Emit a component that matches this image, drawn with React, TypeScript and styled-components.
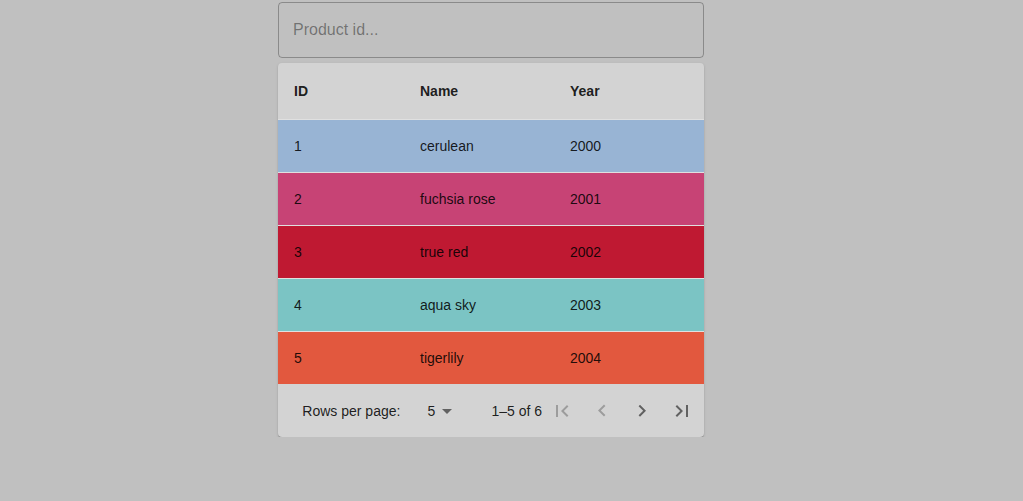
import React from "react";
import styled, { createGlobalStyle } from "styled-components";

const GlobalStyle = createGlobalStyle`
  html, body {
    margin: 0;
    padding: 0;
    background: #c0c0c0;
    font-family: "Liberation Sans", Arial, Helvetica, sans-serif;
  }
  * { box-sizing: border-box; }
`;

const Page = styled.div`
  display: flex;
  flex-direction: column;
  width: 426px;
  margin: 2px 0 0 278px;
`;

const SearchInput = styled.input`
  height: 56px;
  width: 100%;
  margin: 0 0 5px 0;
  padding: 0 14px;
  border: 1px solid rgba(0, 0, 0, 0.28);
  border-radius: 4px;
  background: transparent;
  font-family: "Liberation Sans", Arial, sans-serif;
  font-size: 16px;
  color: rgba(0, 0, 0, 0.87);
  outline: none;
  &::placeholder {
    color: rgba(0, 0, 0, 0.42);
    opacity: 1;
  }
`;

const Paper = styled.div`
  background: #d3d3d3;
  border-radius: 4px;
  overflow: hidden;
  box-shadow: 0px 2px 1px -1px rgba(0, 0, 0, 0.2), 0px 1px 1px 0px rgba(0, 0, 0, 0.14),
    0px 1px 3px 0px rgba(0, 0, 0, 0.12);
`;

const Table = styled.table`
  width: 100%;
  border-collapse: collapse;
  border-spacing: 0;
  table-layout: fixed;
`;

const HeadCell = styled.th<{ $w: number }>`
  width: ${(p) => p.$w}px;
  text-align: left;
  padding: 16px;
  font-size: 14px;
  font-weight: 700;
  line-height: 24px;
  color: rgba(0, 0, 0, 0.87);
  border-bottom: 1px solid #e0e0e0;
`;

const Row = styled.tr<{ $bg: string }>`
  background: ${(p) => p.$bg};
`;

const Cell = styled.td`
  padding: 16px;
  font-size: 14px;
  line-height: 20px;
  color: rgba(0, 0, 0, 0.87);
  border-bottom: 1px solid #e0e0e0;
`;

const Body = styled.tbody`
  & tr:last-child td { border-bottom: 0; }
`;

const Toolbar = styled.div`
  display: flex;
  align-items: center;
  height: 53px;
  padding: 0 2px 0 24px;
  font-size: 14px;
  color: rgba(0, 0, 0, 0.87);
`;

const Label = styled.span`
  line-height: 20px;
  white-space: nowrap;
`;

const Select = styled.div`
  display: flex;
  align-items: center;
  margin: 0 32px 0 11px;
  padding-left: 8px;
`;

const SelectValue = styled.span`
  min-width: 16px;
  text-align: right;
  line-height: 20px;
`;

const Displayed = styled.span`
  line-height: 20px;
  white-space: nowrap;
  flex-shrink: 0;
`;

const Spacer = styled.div`
  flex: 1;
`;

const Actions = styled.div`
  display: flex;
  align-items: center;
`;

const IconButton = styled.button<{ $disabled?: boolean }>`
  width: 40px;
  height: 40px;
  padding: 8px;
  border: 0;
  background: transparent;
  display: flex;
  align-items: center;
  justify-content: center;
  color: ${(p) => (p.$disabled ? "rgba(0,0,0,0.26)" : "rgba(0,0,0,0.54)")};
  cursor: ${(p) => (p.$disabled ? "default" : "pointer")};
  svg { width: 24px; height: 24px; fill: currentColor; }
`;

const DropIcon = styled.svg`
  width: 24px;
  height: 24px;
  fill: rgba(0, 0, 0, 0.54);
`;

const rows = [
  { id: 1, name: "cerulean", year: 2000, color: "#98B4D4" },
  { id: 2, name: "fuchsia rose", year: 2001, color: "#C74375" },
  { id: 3, name: "true red", year: 2002, color: "#BF1932" },
  { id: 4, name: "aqua sky", year: 2003, color: "#7BC4C4" },
  { id: 5, name: "tigerlily", year: 2004, color: "#E2583E" },
];

export default function App() {
  return (
    <>
      <GlobalStyle />
      <Page>
        <SearchInput placeholder="Product id..." />
        <Paper>
          <Table>
            <thead>
              <tr>
                <HeadCell $w={126}>ID</HeadCell>
                <HeadCell $w={150}>Name</HeadCell>
                <HeadCell $w={150}>Year</HeadCell>
              </tr>
            </thead>
            <Body>
              {rows.map((r) => (
                <Row key={r.id} $bg={r.color}>
                  <Cell>{r.id}</Cell>
                  <Cell>{r.name}</Cell>
                  <Cell>{r.year}</Cell>
                </Row>
              ))}
            </Body>
          </Table>
          <Toolbar>
            <Spacer />
            <Label>Rows per page:</Label>
            <Select>
              <SelectValue>5</SelectValue>
              <DropIcon viewBox="0 0 24 24">
                <path d="M7 10l5 5 5-5z" />
              </DropIcon>
            </Select>
            <Displayed>1–5 of 6</Displayed>
            <Actions>
              <IconButton $disabled aria-label="first page">
                <svg viewBox="0 0 24 24">
                  <path d="M18.41 16.59L13.82 12l4.59-4.59L17 6l-6 6 6 6zM6 6h2v12H6z" />
                </svg>
              </IconButton>
              <IconButton $disabled aria-label="previous page">
                <svg viewBox="0 0 24 24">
                  <path d="M15.41 16.09l-4.58-4.59 4.58-4.59L14 5.5l-6 6 6 6z" />
                </svg>
              </IconButton>
              <IconButton aria-label="next page">
                <svg viewBox="0 0 24 24">
                  <path d="M8.59 16.34l4.58-4.59-4.58-4.59L10 5.75l6 6-6 6z" />
                </svg>
              </IconButton>
              <IconButton aria-label="last page">
                <svg viewBox="0 0 24 24">
                  <path d="M5.59 7.41L10.18 12l-4.59 4.59L7 18l6-6-6-6zM16 6h2v12h-2z" />
                </svg>
              </IconButton>
            </Actions>
          </Toolbar>
        </Paper>
      </Page>
    </>
  );
}
